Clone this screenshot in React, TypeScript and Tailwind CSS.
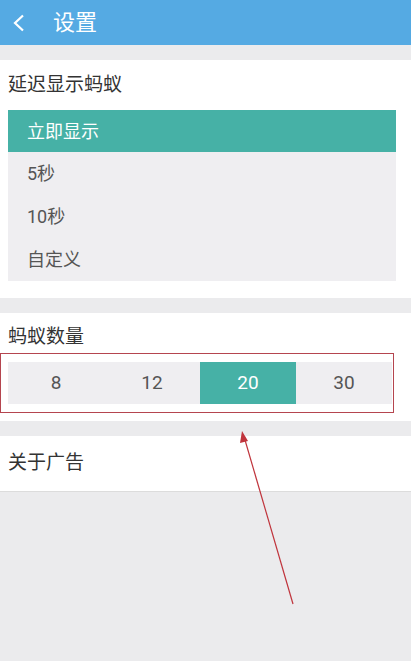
import React from "react";

const font = { fontFamily: '"Roboto", "Noto Sans CJK SC", sans-serif' };

const delays = ["立即显示", "5秒", "10秒", "自定义"];
const counts = ["8", "12", "20", "30"];

export default function App() {
  return (
    <div className="relative w-[418px] h-[661px] overflow-hidden bg-white" style={font}>
      <div className="w-[411px] h-full flex flex-col bg-[#ebebed]">
        {/* Header */}
        <div className="h-[45px] shrink-0 flex items-center bg-[#55aae3] text-white">
          <svg width="14" height="18" viewBox="0 0 14 18" className="ml-[12px]">
            <path d="M11 1.5 L3 9 L11 16.5" fill="none" stroke="white" strokeWidth="2.2" />
          </svg>
          <span className="ml-[27px] text-[22px] leading-none">设置</span>
        </div>

        <div className="h-[15px] shrink-0" />

        {/* Delay section */}
        <div className="bg-white pb-[17px]">
          <div className="h-[50px] flex items-center pl-[8px] text-[19px] text-[#333]">延迟显示蚂蚁</div>
          <div className="ml-[8px] w-[388px] bg-[#efeef1]">
            {delays.map((d, i) => (
              <div
                key={d}
                className={
                  i === 0
                    ? "h-[42px] flex items-center pl-[19px] text-[18px] bg-[#46b1a6] text-white"
                    : "h-[43px] flex items-center pl-[19px] text-[18px] text-[#555]"
                }
              >
                {d}
              </div>
            ))}
          </div>
        </div>

        <div className="h-[15px] shrink-0" />

        {/* Count section */}
        <div className="bg-white pb-[8px]">
          <div className="h-[40px] flex items-end pb-[2px] pl-[8px] text-[19px] text-[#333]">蚂蚁数量</div>
          <div className="w-[394px] h-[60px] border border-[#b5454f] flex items-center pl-[7px]">
            <div className="w-[384px] h-[42px] flex bg-[#efeef1]">
              {counts.map((c) => (
                <div
                  key={c}
                  className={
                    c === "20"
                      ? "flex-1 flex items-center justify-center text-[19px] bg-[#46b1a6] text-white"
                      : "flex-1 flex items-center justify-center text-[19px] text-[#555]"
                  }
                >
                  {c}
                </div>
              ))}
            </div>
          </div>
        </div>

        <div className="h-[15px] shrink-0" />

        {/* About ads */}
        <div className="h-[56px] bg-white border-b border-[#dcdcdc] flex items-center pl-[8px] text-[19px] text-[#333]">
          关于广告
        </div>
      </div>

      {/* annotation arrow */}
      <svg className="absolute left-0 top-0 pointer-events-none" width="418" height="661">
        <line x1="293" y1="604" x2="245" y2="440" stroke="#c0343c" strokeWidth="1.2" />
        <polygon points="242,431 240,443 248,441" fill="#c0343c" />
      </svg>
    </div>
  );
}
